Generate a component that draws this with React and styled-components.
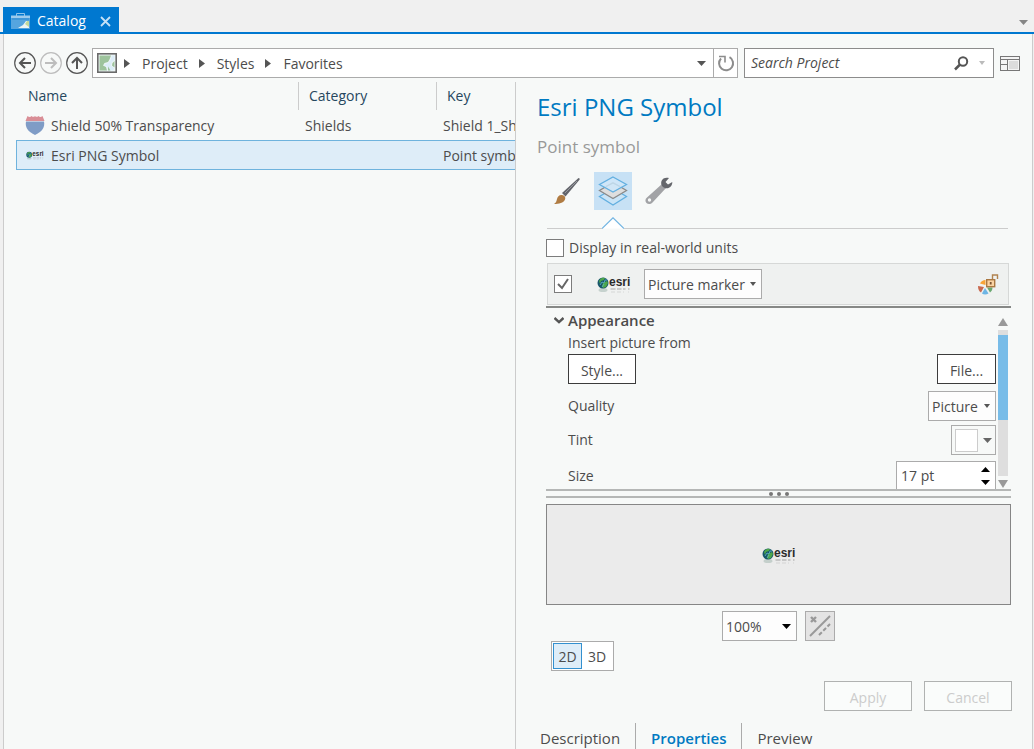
import React, { useState } from "react";
import styled, { createGlobalStyle } from "styled-components";

const C = {
  page: "#f0f0f0",
  panel: "#f7f9f8",
  blue: "#0078d0",
  link: "#007ac2",
  text: "#4c4c4c",
  heading: "#26475e",
  grey: "#ababab",
  line: "#cccccc",
  selected: "#deedf8",
  selectedLine: "#6fb3dd",
};

const GlobalStyle = createGlobalStyle`
  * { box-sizing: border-box; }
  body {
    margin: 0;
    background: ${C.page};
    color: ${C.text};
    font: 14px/20px "Open Sans", "Noto Sans", sans-serif;
  }
  button, input, select { font: inherit; color: inherit; margin: 0; }
  button { padding: 0; border: 0; background: none; }
  svg { display: block; flex: none; }
`;

const Page = styled.div`
  display: flex;
  flex-direction: column;
  min-height: 100vh;
`;

const Strip = styled.header`
  display: flex;
  align-items: flex-end;
  justify-content: space-between;
  padding: 7px 0 0 3px;
  border-bottom: 2px solid ${C.blue};
`;

const DockTab = styled.div`
  display: flex;
  align-items: center;
  gap: 7px;
  width: 116px;
  height: 25px;
  padding: 3px 8px 0 8px;
  background: ${C.blue};
  color: #fff;
`;

const DockTitle = styled.span`
  flex: 1;
`;

const StripMenu = styled.button`
  padding: 0 6px 7px;
`;

const Panel = styled.main`
  flex: 1;
  display: flex;
  flex-direction: column;
  margin: 0 1px 0 3px;
  border: solid ${C.line};
  border-width: 0 1px;
  background: ${C.panel};
`;

const Toolbar = styled.div`
  display: flex;
  align-items: center;
  gap: 6px;
  padding: 14px 12px 4px 10px;
`;

const NavButtons = styled.nav`
  display: flex;
  gap: 4px;
  margin-right: -2px;
`;

const AddressBar = styled.div`
  flex: 1;
  display: flex;
  align-items: center;
  height: 30px;
  border: 1px solid ${C.grey};
  background: #fff;
`;

const Crumbs = styled.div`
  flex: 1;
  display: flex;
  align-items: center;
  gap: 12px;
  padding-left: 4px;
`;

const CrumbArrow = styled.span`
  display: flex;
  margin-left: ${(p) => (p.$first ? -5 : -1)}px;
`;

const Crumb = styled.a`
  padding-top: 2px;
  color: inherit;
  text-decoration: none;
`;

const BarButton = styled.button`
  display: flex;
  align-items: center;
  justify-content: center;
  width: 24px;
  height: 28px;
  border-left: ${(p) => (p.$divided ? `1px solid ${C.grey}` : "0")};
`;

const SearchBox = styled.label`
  display: flex;
  align-items: center;
  gap: 10px;
  width: 250px;
  height: 30px;
  padding: 0 8px 0 6px;
  border: 1px solid #8c8c8c;
  background: #fff;
`;

const SearchInput = styled.input`
  flex: 1;
  min-width: 0;
  padding: 0;
  border: 0;
  outline: 0;
  background: none;
  font-style: italic;
  &::placeholder { color: ${C.text}; opacity: 1; }
`;

const Body = styled.div`
  flex: 1;
  display: flex;
`;

const ListPane = styled.section`
  flex: 1;
  min-width: 0;
  overflow: hidden;
  padding-left: 12px;
`;

const List = styled.table`
  width: 100%;
  table-layout: fixed;
  border-collapse: separate;
  border-spacing: 0;
`;

const HeadCell = styled.th`
  width: ${(p) => p.$width || "auto"};
  height: 28px;
  padding: 0 0 0 ${(p) => (p.$first ? 12 : 10)}px;
  border-left: ${(p) => (p.$first ? "0" : `1px solid ${C.line}`)};
  color: ${C.heading};
  font-weight: 400;
  text-align: left;
`;

const Row = styled.tr`
  height: 30px;
  & > td {
    border: solid ${(p) => (p.$selected ? C.selectedLine : "transparent")};
    border-width: 1px 0;
    background: ${(p) => (p.$selected ? C.selected : "transparent")};
  }
  & > td:first-child { border-left-width: 1px; }
`;

const Cell = styled.td`
  padding: 2px 0 0 7px;
  overflow: hidden;
  white-space: nowrap;
`;

const Named = styled.div`
  display: flex;
  align-items: center;
  gap: 6px;
  padding-left: 1px;
`;

const IconSlot = styled.span`
  display: flex;
  justify-content: center;
  width: 20px;
  margin-top: -2px;
`;

const Details = styled.section`
  display: flex;
  flex-direction: column;
  width: 517px;
  padding: 8px 21px 0 21px;
  border-left: 1px solid ${C.line};
`;

const Title = styled.h1`
  margin: 0;
  color: ${C.link};
  font-size: 24px;
  font-weight: 400;
  line-height: 34px;
`;

const Subtitle = styled.p`
  margin: 11px 0 13px;
  color: #999;
  font-size: 17px;
  line-height: 24px;
`;

const ToolTabs = styled.div`
  display: flex;
  gap: 8px;
  padding-left: 11px;
`;

const ToolTab = styled.button`
  display: flex;
  align-items: center;
  justify-content: center;
  width: 38px;
  height: 38px;
  background: ${(p) => (p.$active ? "#c7e1f5" : "transparent")};
`;

const TabLine = styled.div`
  display: flex;
  align-items: flex-end;
  height: 19px;
  margin: 0 3px 0 10px;
  &::before { content: ""; width: 55px; border-top: 1px solid ${C.line}; }
  &::after { content: ""; flex: 1; border-top: 1px solid ${C.line}; }
`;

const Form = styled.div`
  margin: 0 0 0 9px;
`;

const Check = styled.input`
  appearance: none;
  flex: none;
  width: 18px;
  height: 18px;
  border: 1px solid #7c7c7c;
  background: #fff;
  &:checked {
    background: #fff
      url("data:image/svg+xml,%3Csvg xmlns='http://www.w3.org/2000/svg' viewBox='0 0 16 16'%3E%3Cpath d='M3 8l4 4 6-9' fill='none' stroke='%23666' stroke-width='2'/%3E%3C/svg%3E");
  }
`;

const CheckLabel = styled.label`
  display: flex;
  align-items: center;
  gap: 5px;
  height: 20px;
  margin: 9px 0 5px;
`;

const LayerRow = styled.div`
  display: flex;
  align-items: center;
  height: 42px;
  margin: 0 2px 1px 1px;
  padding: 0 9px 0 6px;
  border: 1px solid #d6d8d7;
  background: #eff1f0;
`;

const LayerLogo = styled.span`
  margin: 0 13px 0 25px;
`;

const Spacer = styled.span`
  flex: 1;
`;

const SelectWrap = styled.span`
  display: inline-grid;
  grid-template-columns: 1fr auto;
  align-items: center;
  width: ${(p) => p.$width}px;
  height: 30px;
  border: 1px solid ${C.grey};
  background: #fdfdfd;
  & > * { grid-row: 1; }
  & > svg { grid-column: 2; margin-right: 5px; pointer-events: none; z-index: 1; }
`;

const Select = styled.select`
  appearance: none;
  grid-column: 1 / 3;
  width: 100%;
  height: 28px;
  padding: 2px 0 0 3px;
  border: 0;
  outline: 0;
  background: none;
`;

const ScrollArea = styled.div`
  display: flex;
  height: 183px;
  overflow: hidden;
  border-top: 2px solid #868886;
`;

const Fields = styled.div`
  flex: 1;
  padding: 0 2px 0 8px;
`;

const Scrollbar = styled.div`
  display: flex;
  flex-direction: column;
  align-items: center;
  gap: 4px;
  width: 10px;
  margin: 10px 3px 0 0;
`;

const Track = styled.div`
  width: 10px;
  height: 146px;
  padding-top: 5px;
  background: #dedede;
`;

const Thumb = styled.div`
  height: 85px;
  background: #78bce8;
`;

const SectionHead = styled.h2`
  display: flex;
  align-items: center;
  gap: 4px;
  margin: 0;
  font-size: 15px;
  font-weight: 600;
  line-height: 24px;
`;

const FieldText = styled.div`
  padding-left: 14px;
  line-height: 22px;
`;

const FieldRow = styled.div`
  display: flex;
  align-items: center;
  justify-content: space-between;
  height: 30px;
  margin-bottom: ${(p) => p.$gap || 0}px;
  padding-left: 14px;
`;

const PushButton = styled.button`
  width: ${(p) => p.$width}px;
  height: 30px;
  padding-top: 3px;
  border: 1px solid #3c3c3c;
  background: #fff;
  &:disabled { border-color: #b0b2b1; background: #fafcfb; color: #ccc; }
`;

const Swatch = styled.button`
  display: flex;
  align-items: center;
  gap: 5px;
  height: 30px;
  padding: 0 3px;
  border: 1px solid ${C.grey};
`;

const SwatchColor = styled.span`
  width: 23px;
  height: 23px;
  border: 1px solid ${C.line};
  background: #fff;
`;

const SpinBox = styled.span`
  display: flex;
  align-items: center;
  width: 100px;
  height: 30px;
  padding: 0 5px 0 4px;
  border: 1px solid ${C.grey};
  background: #fff;
`;

const SpinInput = styled.input`
  flex: 1;
  min-width: 0;
  padding: 0;
  border: 0;
  outline: 0;
  background: none;
`;

const SpinButtons = styled.span`
  display: grid;
  gap: 8px;
`;

const Splitter = styled.div`
  display: flex;
  align-items: center;
  justify-content: center;
  gap: 4px;
  height: 9px;
  margin-bottom: 6px;
  border: solid #b5b7b6;
  border-width: 2px 0;
`;

const Dot = styled.i`
  width: 4px;
  height: 4px;
  border-radius: 50%;
  background: #777;
`;

const Preview = styled.div`
  display: flex;
  align-items: center;
  justify-content: center;
  height: 101px;
  border: 1px solid #868686;
  background: #ebebeb;
`;

const ZoomRow = styled.div`
  display: flex;
  justify-content: center;
  gap: 8px;
  padding-top: 6px;
`;

const SquareButton = styled.button`
  display: flex;
  align-items: center;
  justify-content: center;
  width: 30px;
  height: 30px;
  border: 1px solid ${C.grey};
  background: #e4e4e4;
`;

const Segments = styled.div`
  display: inline-flex;
  height: 30px;
  margin-left: 5px;
  padding: 1px;
  border: 1px solid ${C.grey};
  background: #fff;
`;

const Segment = styled.button`
  width: ${(p) => (p.$on ? 29 : 30)}px;
  padding-top: 1px;
  border: 1px solid ${(p) => (p.$on ? "#3390cf" : "transparent")};
  background: ${(p) => (p.$on ? C.selected : "transparent")};
`;

const Actions = styled.div`
  display: flex;
  justify-content: flex-end;
  gap: 12px;
  margin: 10px -1px 12px 0;
`;

const BottomTabs = styled.div`
  display: flex;
  flex: 1;
  margin-left: -12px;
  font-size: 15px;
`;

const BottomTab = styled.button`
  display: flex;
  padding: 5px 15px 0;
  border-left: ${(p) => (p.$first ? "0" : `1px solid ${C.grey}`)};
  color: ${(p) => (p.$active ? C.link : C.text)};
  font-weight: ${(p) => (p.$active ? 600 : 400)};
`;

function Arrow({ dir = "down", w = 9, h = 5, color = "#555" }) {
  const d = {
    down: `M0 0H${w}L${w / 2} ${h}Z`,
    up: `M0 ${h}H${w}L${w / 2} 0Z`,
    right: `M0 0V${h}L${w} ${h / 2}Z`,
  }[dir];
  return (
    <svg width={w} height={h} viewBox={`0 0 ${w} ${h}`}>
      <path d={d} fill={color} />
    </svg>
  );
}

function NavIcon({ turn = 0, color = "#555" }) {
  return (
    <svg width="22" height="22" viewBox="0 0 22 22" fill="none" stroke={color}>
      <circle cx="11" cy="11" r="10.3" strokeWidth="1.2" />
      <path d="M17 11H6.500M11 6l-5 5 5 5" strokeWidth="2" transform={`rotate(${turn} 11 11)`} />
    </svg>
  );
}

function EsriLogo({ width = 34 }) {
  return (
    <svg width={width} height={(width * 20) / 34} viewBox="0 0 34 20" role="img" aria-label="Esri">
      <ellipse cx="6" cy="16" rx="4.500" ry="2" fill="#8aa69b" opacity=".4" />
      <circle cx="6" cy="9" r="5.500" fill="#17566b" />
      <path d="M2 7c1-3 4-4 6-3l-1 2-3 1-1 3zM6 9l4-2 1 2-2 4-3 1-1-2z" fill="#4da64a" />
      <path d="M3 11l2-3 2 1 1-3 2 0M5 13l2-3" fill="none" stroke="#62b6cf" strokeWidth=".8" />
      <text x="12" y="12" fontFamily="Liberation Sans, sans-serif" fontWeight="700" fontSize="12" fill="#2b2b2b">
        esri
      </text>
      <path d="M13.500 15h5M20 15h4.500M26 15h2.500M31 15h1.500" stroke="#777" strokeWidth="1.600" opacity=".4" />
      <path d="M14 18h4M20 18h4M26 18h1M31 18h1" stroke="#777" opacity=".2" />
    </svg>
  );
}

const CatalogIcon = () => (
  <svg width="19" height="18" viewBox="0 0 19 18">
    <path d="M5.500 4V1.500h8V4" fill="none" stroke="#8ec4ec" />
    <path d="M0 3.500h19V6H0z" fill="#9ccbed" />
    <path d="M0 6h19v11H0z" fill="#55a5df" />
    <path d="M1 7h17" stroke="#2c8bd2" />
    <path d="M7 16l5-3 3-4h3v7z" fill="#edf5f3" />
    <path d="M14 12l2-3h2v6z" fill="#c0d99c" />
  </svg>
);

const MapIcon = () => (
  <svg width="20" height="20" viewBox="0 0 20 20">
    <rect x=".8" y=".8" width="18.400" height="18.400" fill="#eef5f6" stroke="#6b6b6b" strokeWidth="1.600" />
    <path d="M2.500 2.500H14l-1.500 4L11 9l-3.500 1L6 12.500l3 1.500 1 3.500H2.500z" fill="#9dc39c" />
    <path d="M17.500 2.500H15l-1.500 4.500L11 10l-3 1-1 1.500 3 1 1 4h5l1.500-2-3.500-3 1-3.500 2.500-2z" fill="#dcedf8" />
    <path d="M17.500 8l-2 2-.5 2.500 2.500 2zM11 13.500l2.500 4H11z" fill="#9dc39c" />
  </svg>
);

const ShieldIcon = () => (
  <svg width="20" height="20" viewBox="0 0 20 20">
    <path d="M1 6.500h18c1 5-1 10-9 13.500C2 16.500 0 11.500 1 6.500z" fill="#7f9cc6" />
    <path d="M2.500 1c1.500 1.300 3 1.300 4 0 1.500 1.300 2.500 1 3.500 0 1 1 2 1.300 3.500 0 1 1.300 2.500 1.300 4 0L19.500 6H.5z" fill="#d98e96" />
  </svg>
);

const RefreshIcon = () => (
  <svg width="18" height="18" viewBox="0 0 18 18" fill="none" stroke="#8c8c8c" strokeWidth="2">
    <path d="M12.500 3.200A7 7 0 1 1 4 4.500" />
    <path d="M2 2.500h6V8.500" strokeWidth="1.600" />
  </svg>
);

const SearchIcon = () => (
  <svg width="15" height="15" viewBox="0 0 15 15" fill="none" stroke="#555">
    <circle cx="9" cy="5.500" r="4.200" strokeWidth="2" />
    <path d="M6 8.500L1 13.500" strokeWidth="2.500" />
  </svg>
);

const LayoutIcon = () => (
  <svg width="20" height="15" viewBox="0 0 20 15">
    <rect x=".5" y=".5" width="19" height="14" fill="#f4f4f4" stroke="#777" />
    <path d="M1 3.500h18M7.500 3.500V14M1 8.500h6.500" stroke="#777" fill="none" />
    <rect x="9" y="5" width="9" height="8" fill="#dcdcdc" />
  </svg>
);

const BrushIcon = () => (
  <svg width="28" height="28" viewBox="0 0 28 28">
    <path d="M25.500 1c1 0 1.500 1 1 1.700L12.500 19.500l-3.500-3.500z" fill="#63656b" />
    <path d="M24 4L12 16" stroke="#96989d" />
    <path d="M9 18c2.500.5 4 2.200 3 4.500-1.500 3.500-6 4.500-11 4.500 2-1 2.500-3 3-5 .5-2.500 2.500-4.500 5-4z" fill="#b07c43" />
  </svg>
);

const LayersIcon = () => (
  <svg width="30" height="30" viewBox="0 0 30 30" strokeWidth="1.300">
    <path d="M15 12.500L28.500 20.500 15 29 1.500 20.500z" fill="#c9e4f7" stroke="#62afe0" />
    <path d="M15 6.500L28.500 14.500 15 22.500 1.500 14.500z" fill="#dedede" stroke="#8a8a8a" />
    <path d="M15 1L28.500 8.500 15 16 1.500 8.500z" fill="#cfe7f8" fillOpacity=".9" stroke="#62afe0" />
    <path d="M8 10.500l7-3.500 7 3.500" fill="none" stroke="#bdd6e6" />
  </svg>
);

const WrenchIcon = () => (
  <svg width="30" height="30" viewBox="0 0 30 30">
    <path d="M18 8l4 4L8.500 26.500c-2 2-4.500 2-6 .5s-1.500-4 .5-5.500z" fill="#a2a3a6" />
    <circle cx="5.500" cy="24" r="1.700" fill="#f7f9f8" />
    <path d="M25 2c-3-1-6.500 0-7.500 3-.7 2-.3 4 1 5.500 1.500 1.700 4 2.200 6 1.500 2.700-1 4-3.500 3.800-6L24 8.500 21.500 6z" fill="#65676c" />
  </svg>
);

const Caret = () => (
  <svg width="22" height="12" viewBox="0 0 22 12">
    <path d="M0 11.500L11 .8l11 10.700" fill="#fff" stroke="#72b5e2" strokeWidth="1.200" />
  </svg>
);

const LockColorIcon = () => (
  <svg width="21" height="21" viewBox="0 0 21 21">
    <path d="M7.500 6v5L2 9.500C3 7.500 5 6 7.500 6z" fill="#f8a336" />
    <path d="M0 12l6 1-3 5.500C1 17.500 0 15 0 12z" fill="#c8694f" />
    <path d="M7 14l3.500 5.500c-2 1.300-5 1.300-6.500 0z" fill="#6db5e4" />
    <path d="M9 13.500h5.500c0 2-1 4-2.500 5z" fill="#6aa870" />
    <rect x="8.700" y="5.700" width="8" height="7" fill="#fad2a2" stroke="#aa7842" strokeWidth="1.400" />
    <path d="M14.500 5V1h5v4" fill="none" stroke="#b1834f" strokeWidth="1.400" />
    <path d="M12.700 8v2.500" stroke="#7c5531" strokeWidth="1.800" />
  </svg>
);

const SlashIcon = () => (
  <svg width="22" height="22" viewBox="0 0 22 22" fill="none" stroke="#999">
    <path d="M1 21L21 1" strokeWidth="2" />
    <path d="M10 20L21 9" strokeWidth="2" strokeDasharray="4 2" />
    <path d="M2 2l5 5M7 2L2 7" strokeWidth="2.400" />
  </svg>
);

export default function App() {
  const [realWorld, setRealWorld] = useState(false);
  const [visible, setVisible] = useState(true);
  return (
    <>
      <GlobalStyle />
      <Page>
        <Strip>
          <DockTab>
            <CatalogIcon />
            <DockTitle>Catalog</DockTitle>
            <button aria-label="Close">
              <svg width="11" height="11" viewBox="0 0 11 11" stroke="#c5e1f6" strokeWidth="1.800">
                <path d="M1 1l9 9M10 1l-9 9" />
              </svg>
            </button>
          </DockTab>
          <StripMenu aria-label="Pane options"><Arrow color="#858585" /></StripMenu>
        </Strip>
        <Panel>
          <Toolbar>
            <NavButtons>
              <button aria-label="Back"><NavIcon /></button>
              <button aria-label="Forward"><NavIcon turn={180} color="#bdbdbd" /></button>
              <button aria-label="Up"><NavIcon turn={90} /></button>
            </NavButtons>
            <AddressBar>
              <Crumbs>
                <MapIcon />
                <CrumbArrow $first><Arrow dir="right" w={6} h={9} /></CrumbArrow>
                <Crumb href="#project">Project</Crumb>
                <CrumbArrow><Arrow dir="right" w={6} h={9} /></CrumbArrow>
                <Crumb href="#styles">Styles</Crumb>
                <CrumbArrow><Arrow dir="right" w={6} h={9} /></CrumbArrow>
                <Crumb href="#favorites">Favorites</Crumb>
              </Crumbs>
              <BarButton aria-label="History"><Arrow /></BarButton>
              <BarButton $divided aria-label="Refresh"><RefreshIcon /></BarButton>
            </AddressBar>
            <SearchBox>
              <SearchInput placeholder="Search Project" aria-label="Search Project" />
              <SearchIcon />
              <Arrow w={6} h={4} color="#bbb" />
            </SearchBox>
            <button aria-label="Show details panel"><LayoutIcon /></button>
          </Toolbar>
          <Body>
            <ListPane>
              <List>
                <thead>
                  <tr>
                    <HeadCell $first>Name</HeadCell>
                    <HeadCell $width="138px">Category</HeadCell>
                    <HeadCell $width="79px">Key</HeadCell>
                  </tr>
                </thead>
                <tbody>
                  <Row>
                    <Cell><Named><IconSlot><ShieldIcon /></IconSlot>Shield 50% Transparency</Named></Cell>
                    <Cell>Shields</Cell>
                    <Cell>Shield 1_Shields_3</Cell>
                  </Row>
                  <Row $selected>
                    <Cell><Named><IconSlot><EsriLogo width={18} /></IconSlot>Esri PNG Symbol</Named></Cell>
                    <Cell />
                    <Cell>Point symbol</Cell>
                  </Row>
                </tbody>
              </List>
            </ListPane>
            <Details>
              <Title>Esri PNG Symbol</Title>
              <Subtitle>Point symbol</Subtitle>
              <ToolTabs>
                <ToolTab aria-label="Symbol"><BrushIcon /></ToolTab>
                <ToolTab $active aria-label="Layers"><LayersIcon /></ToolTab>
                <ToolTab aria-label="Structure"><WrenchIcon /></ToolTab>
              </ToolTabs>
              <TabLine><Caret /></TabLine>
              <Form>
                <CheckLabel>
                  <Check type="checkbox" checked={realWorld} onChange={(e) => setRealWorld(e.target.checked)} />
                  Display in real-world units
                </CheckLabel>
                <LayerRow>
                  <Check type="checkbox" aria-label="Layer visible" checked={visible} onChange={(e) => setVisible(e.target.checked)} />
                  <LayerLogo><EsriLogo /></LayerLogo>
                  <SelectWrap $width={118}>
                    <Select aria-label="Layer type"><option>Picture marker</option></Select>
                    <Arrow w={6} h={4} />
                  </SelectWrap>
                  <Spacer />
                  <button aria-label="Color lock"><LockColorIcon /></button>
                </LayerRow>
                <ScrollArea>
                  <Fields>
                    <SectionHead>
                      <svg width="10" height="7" viewBox="0 0 10 7" fill="none" stroke="#555" strokeWidth="2.400">
                        <path d="M.5 1L5 5.200 9.500 1" />
                      </svg>
                      Appearance
                    </SectionHead>
                    <FieldText>Insert picture from</FieldText>
                    <FieldRow $gap={7}>
                      <PushButton $width={68}>Style...</PushButton>
                      <PushButton $width={59}>File...</PushButton>
                    </FieldRow>
                    <FieldRow $gap={4}>
                      <label htmlFor="quality">Quality</label>
                      <SelectWrap $width={68}>
                        <Select id="quality"><option>Picture</option></Select>
                        <Arrow w={6} h={4} />
                      </SelectWrap>
                    </FieldRow>
                    <FieldRow $gap={6}>
                      <span id="tint">Tint</span>
                      <Swatch aria-labelledby="tint"><SwatchColor /><Arrow color="#666" /></Swatch>
                    </FieldRow>
                    <FieldRow>
                      <label htmlFor="size">Size</label>
                      <SpinBox>
                        <SpinInput id="size" defaultValue="17 pt" />
                        <SpinButtons>
                          <button aria-label="Increase size"><Arrow dir="up" color="#000" /></button>
                          <button aria-label="Decrease size"><Arrow color="#000" /></button>
                        </SpinButtons>
                      </SpinBox>
                    </FieldRow>
                  </Fields>
                  <Scrollbar>
                    <Arrow dir="up" w={10} h={8} color="#999" />
                    <Track><Thumb /></Track>
                    <Arrow w={10} h={8} color="#999" />
                  </Scrollbar>
                </ScrollArea>
                <Splitter><Dot /><Dot /><Dot /></Splitter>
                <Preview><EsriLogo /></Preview>
                <ZoomRow>
                  <SelectWrap $width={75}>
                    <Select aria-label="Zoom"><option>100%</option></Select>
                    <Arrow color="#000" />
                  </SelectWrap>
                  <SquareButton aria-label="Toggle outline"><SlashIcon /></SquareButton>
                </ZoomRow>
                <Segments>
                  <Segment $on>2D</Segment>
                  <Segment>3D</Segment>
                </Segments>
                <Actions>
                  <PushButton $width={88} disabled>Apply</PushButton>
                  <PushButton $width={88} disabled>Cancel</PushButton>
                </Actions>
              </Form>
              <BottomTabs>
                <BottomTab $first>Description</BottomTab>
                <BottomTab $active>Properties</BottomTab>
                <BottomTab>Preview</BottomTab>
              </BottomTabs>
            </Details>
          </Body>
        </Panel>
      </Page>
    </>
  );
}
